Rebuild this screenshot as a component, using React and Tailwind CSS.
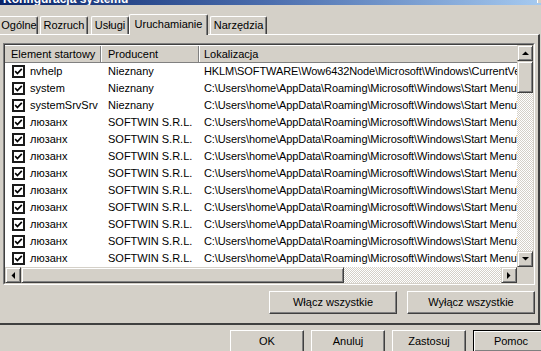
import React from 'react';

const raised =
  'border border-t-white border-l-white border-r-[#404040] border-b-[#404040] shadow-[inset_-1px_-1px_#808080] bg-[#d4d0c8]';
const sbRaised =
  'border border-t-[#d4d0c8] border-l-[#d4d0c8] border-r-[#404040] border-b-[#404040] shadow-[inset_1px_1px_#ffffff,inset_-1px_-1px_#808080] bg-[#d4d0c8]';
const dither =
  'bg-[image:repeating-conic-gradient(#ffffff_0%_25%,#d4d0c8_0%_50%)] bg-[length:2px_2px]';

const PATH = 'C:\\Users\\home\\AppData\\Roaming\\Microsoft\\Windows\\Start Menu\\Programs\\Startup';

const rows = [
  { name: 'nvhelp', vendor: 'Nieznany', loc: 'HKLM\\SOFTWARE\\Wow6432Node\\Microsoft\\Windows\\CurrentVersion\\Run' },
  { name: 'system', vendor: 'Nieznany', loc: PATH },
  { name: 'systemSrvSrv', vendor: 'Nieznany', loc: PATH },
  ...Array.from({ length: 9 }, () => ({ name: 'люзанх', vendor: 'SOFTWIN S.R.L.', loc: PATH })),
];

const Arrow = ({ dir }) => {
  const pts = {
    up: '0,4 3.5,0.5 7,4',
    down: '0,0 7,0 3.5,3.5',
    left: '4,0 4,7 0.5,3.5',
    right: '0,0 0,7 3.5,3.5',
  }[dir];
  const vertical = dir === 'up' || dir === 'down';
  return (
    <svg width={vertical ? 7 : 4} height={vertical ? 4 : 7} viewBox={vertical ? '0 0 7 4' : '0 0 4 7'}>
      <polygon points={pts} fill="#000" />
    </svg>
  );
};

const Check = () => (
  <div className="w-[13px] h-[13px] border-2 border-[#1a1a1a] bg-white flex items-center justify-center">
    <svg width="9" height="9" viewBox="0 0 9 9">
      <polyline points="1.2,4.2 3.4,6.5 7.8,1.8" fill="none" stroke="#000" strokeWidth="1.7" />
    </svg>
  </div>
);

const Tab = ({ label, className = '', active }) => (
  <div
    className={`flex items-center justify-center border-t border-l border-white border-r border-r-[#404040] shadow-[inset_-1px_0_#808080] rounded-t-[2px] bg-[#d4d0c8] ${
      active ? 'h-[21px] mb-[-1px] relative z-10 pb-[2px]' : 'h-[18px]'
    } ${className}`}
  >
    {label}
  </div>
);

const Button = ({ label, className = '' }) => (
  <div className={`flex items-center justify-center ${raised} ${className}`}>{label}</div>
);

export default function App() {
  return (
    <div className="w-[541px] h-[351px] overflow-hidden bg-[#d4d0c8] text-black text-[11px] font-['Liberation_Sans',Arial,sans-serif]">
      {/* Title bar */}
      <div className="h-[5px] overflow-hidden flex justify-between bg-linear-to-r from-[#0a246a] via-[#4c6eae] to-[#a6caf0]">
        <div className="mt-[-8px] pl-[3px] text-[12px] leading-[14px] font-bold text-white whitespace-nowrap">
          Konfiguracja systemu
        </div>
        <div className="w-[4px] h-[3px] bg-[#d4d0c8] border-l border-l-white" />
      </div>

      <div className="h-[9px]" />

      {/* Tabs */}
      <div className="h-[20px] flex items-end ml-[-4px]">
        <Tab label="Ogólne" className="w-[42px] pl-[4px]" />
        <Tab label="Rozruch" className="w-[48px] ml-[2px]" />
        <Tab label="Usługi" className="w-[38px] ml-[3px]" />
        <Tab label="Uruchamianie" className="w-[79px] ml-[0px]" active />
        <Tab label="Narzędzia" className="w-[57px] ml-[2px]" />
      </div>

      {/* Tab panel */}
      <div className="ml-[-4px] w-[544px] border-t border-t-white border-l border-l-white border-r-2 border-r-[#404040] border-b-2 border-b-[#404040] pl-[6px] pt-[8px] pb-[9px]">
        {/* List view */}
        <div className="w-[532px] h-[242px] border border-t-[#808080] border-l-[#808080] border-r-white border-b-white">
          <div className="h-full border border-t-[#404040] border-l-[#404040] border-r-[#d4d0c8] border-b-[#d4d0c8] flex flex-col bg-white">
            <div className="flex flex-1 min-h-0">
              <div className="flex-1 min-w-0 flex flex-col overflow-hidden">
                {/* Header */}
                <div className="h-[18px] flex bg-[#d4d0c8] border-t border-t-white border-b border-b-[#808080]">
                  <div className="w-[96px] pl-[6px] flex items-center border-r border-r-[#808080] whitespace-nowrap">
                    Element startowy
                  </div>
                  <div className="w-[98px] pl-[6px] flex items-center border-l border-l-white border-r border-r-[#808080]">
                    Producent
                  </div>
                  <div className="flex-1 pl-[4px] flex items-center border-l border-l-white">Lokalizacja</div>
                </div>
                {/* Rows */}
                {rows.map((r, i) => (
                  <div key={i} className="h-[17px] flex items-center whitespace-nowrap">
                    <div className="w-[96px] flex items-center pl-[7px] gap-[5px]">
                      <Check />
                      <span>{r.name}</span>
                    </div>
                    <div className="w-[98px] pl-[7px]">{r.vendor}</div>
                    <div className="flex-1 pl-[5px] overflow-hidden tracking-[-0.1px]">{r.loc}</div>
                  </div>
                ))}
              </div>
              {/* Vertical scrollbar */}
              <div className="w-[16px] flex flex-col">
                <div className={`h-[16px] flex items-center justify-center ${sbRaised}`}>
                  <Arrow dir="up" />
                </div>
                <div className={`h-[32px] ${sbRaised}`} />
                <div className={`flex-1 ${dither}`} />
                <div className={`h-[16px] flex items-center justify-center ${sbRaised}`}>
                  <Arrow dir="down" />
                </div>
              </div>
            </div>
            {/* Horizontal scrollbar */}
            <div className="h-[16px] flex">
              <div className={`w-[16px] flex items-center justify-center ${sbRaised}`}>
                <Arrow dir="left" />
              </div>
              <div className={`w-[323px] ${sbRaised}`} />
              <div className={`flex-1 ${dither}`} />
              <div className={`w-[16px] flex items-center justify-center ${sbRaised}`}>
                <Arrow dir="right" />
              </div>
              <div className="w-[16px] bg-[#d4d0c8]" />
            </div>
          </div>
        </div>

        {/* Enable / disable buttons */}
        <div className="flex justify-end gap-[10px] pr-[3px] mt-[6px]">
          <Button label="Włącz wszystkie" className="w-[128px] h-[23px]" />
          <Button label="Wyłącz wszystkie" className="w-[128px] h-[23px]" />
        </div>
      </div>

      {/* Dialog buttons */}
      <div className="flex gap-[7px] pl-[230px] pt-[5px]">
        <Button label="OK" className="w-[74px] h-[23px] shrink-0" />
        <Button label="Anuluj" className="w-[74px] h-[23px] shrink-0" />
        <Button label="Zastosuj" className="w-[74px] h-[23px] shrink-0" />
        <div className="w-[76px] h-[23px] shrink-0 border border-black">
          <Button label="Pomoc" className="w-full h-full" />
        </div>
      </div>
    </div>
  );
}
